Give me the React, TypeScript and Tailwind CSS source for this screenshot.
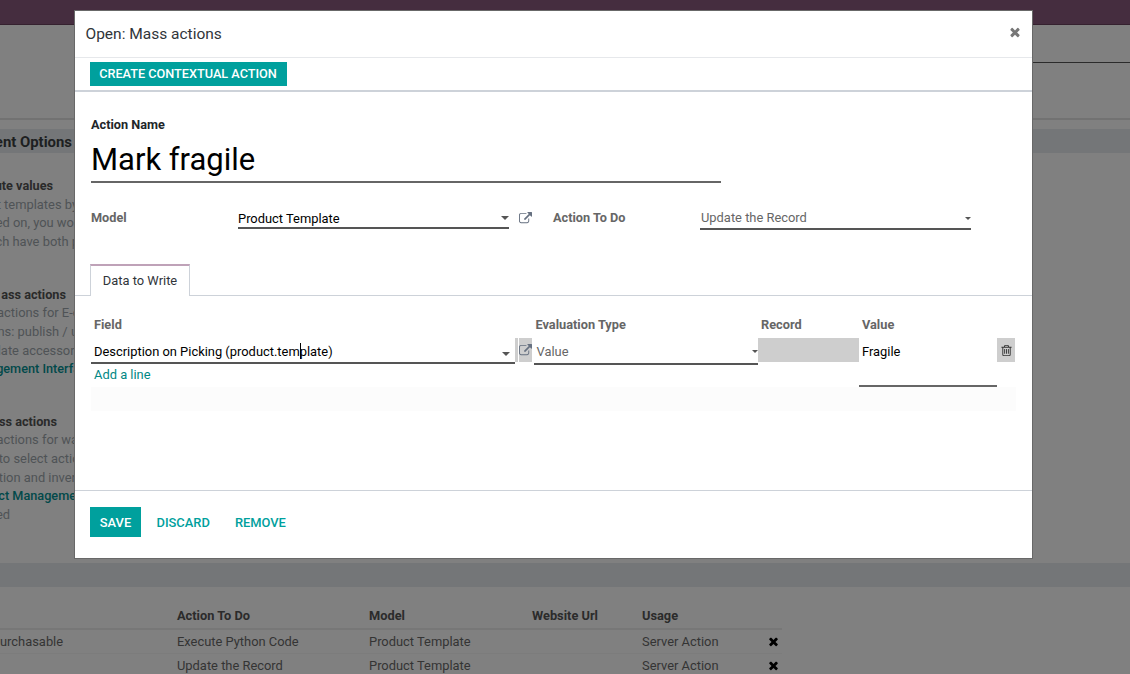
import React from "react";

const Icon = ({ d, className }: { d: string; className: string }) => (
  <svg viewBox="0 0 1792 1792" fill="currentColor" className={className}>
    <path d={d} />
  </svg>
);

const EXTERNAL =
  "M1408 928v320q0 119-84.5 203.5t-203.5 84.5h-832q-119 0-203.5-84.5t-84.5-203.5v-832q0-119 84.5-203.5t203.5-84.5h704q14 0 23 9t9 23v64q0 14-9 23t-23 9h-704q-66 0-113 47t-47 113v832q0 66 47 113t113 47h832q66 0 113-47t47-113v-320q0-14 9-23t23-9h64q14 0 23 9t9 23zm384-864v512q0 26-19 45t-45 19-45-19l-176-176-652 652q-10 10-23 10t-23-10l-114-114q-10-10-10-23t10-23l652-652-176-176q-19-19-19-45t19-45 45-19h512q26 0 45 19t19 45z";
const TRASH =
  "M704 736v576q0 14-9 23t-23 9h-64q-14 0-23-9t-9-23v-576q0-14 9-23t23-9h64q14 0 23 9t9 23zm256 0v576q0 14-9 23t-23 9h-64q-14 0-23-9t-9-23v-576q0-14 9-23t23-9h64q14 0 23 9t9 23zm256 0v576q0 14-9 23t-23 9h-64q-14 0-23-9t-9-23v-576q0-14 9-23t23-9h64q14 0 23 9t9 23zm128 724v-948h-896v948q0 22 7 40.5t14.5 27 10.5 8.5h832q3 0 10.5-8.5t14.5-27 7-40.5zm-672-1076h448l-48-117q-7-9-17-11h-317q-10 2-17 11zm928 32v64q0 14-9 23t-23 9h-96v948q0 83-47 143.5t-113 60.5h-832q-66 0-113-58.5t-47-141.5v-952h-96q-14 0-23-9t-9-23v-64q0-14 9-23t23-9h309l70-167q15-37 54-63t79-26h320q40 0 79 26t54 63l70 167h309q14 0 23 9t9 23z";
const TIMES =
  "M1490 1322q0 40-28 68l-136 136q-28 28-68 28t-68-28l-294-294-294 294q-28 28-68 28t-68-28l-136-136q-28-28-28-68t28-68l294-294-294-294q-28-28-28-68t28-68l136-136q28-28 68-28t68 28l294 294 294-294q28-28 68-28t68 28l136 136q28 28 28 68t-28 68l-294 294 294 294q28 28 28 68z";

const Caret = ({ className }: { className: string }) => (
  <svg viewBox="0 0 8 4" fill="currentColor" className={className}>
    <path d="M0 0h8L4 4z" />
  </svg>
);

type Line = { text: string; width: string; kind: string };
const bold = "font-bold text-[12.7px] text-[#2a2a2a]";
const muted = "text-[#4f5356]";
const link = "font-medium text-[12.7px] text-[#02494a]";

const sections: { gap: string; lines: Line[] }[] = [
  {
    gap: "pt-[23.4px]",
    lines: [
      { text: "ute values", width: "w-[53px]", kind: bold },
      { text: "t templates by", width: "w-[78px]", kind: muted },
      { text: "ed on, you wou", width: "w-[81px]", kind: muted },
      { text: "ch have both p", width: "w-[79px]", kind: muted },
    ],
  },
  {
    gap: "pt-[34.5px]",
    lines: [
      { text: "ass actions", width: "w-[66px]", kind: bold },
      { text: "actions for E-c", width: "w-[79.5px]", kind: muted },
      { text: "ns: publish / u", width: "w-[78px]", kind: muted },
      { text: "late accessor", width: "w-[74.5px]", kind: muted },
      { text: "gement Interfa", width: "w-[80px]", kind: link },
    ],
  },
  {
    gap: "pt-[34px]",
    lines: [
      { text: "ss actions", width: "w-[57px]", kind: bold },
      { text: "actions for wa", width: "w-[78px]", kind: muted },
      { text: "to select actio", width: "w-[79.5px]", kind: muted },
      { text: "tion and inver", width: "w-[76px]", kind: muted },
      { text: "ct Manageme", width: "w-[76px]", kind: link },
      { text: "ed", width: "w-[10px]", kind: muted },
    ],
  },
];

const cols = "grid grid-cols-[177px_192px_163px_110px_126px_14px] items-center";
const rows = [
  ["urchasable", "Execute Python Code", "Product Template", "", "Server Action"],
  ["", "Update the Record", "Product Template", "", "Server Action"],
];

function Backdrop() {
  return (
    <div className="flex h-[674px] w-[1130px] flex-col bg-[#808080]">
      <div className="h-[25px] shrink-0 border-b border-[#35212f] bg-[#452d3f]" />
      <div className="flex h-[93px] shrink-0 justify-end">
        <div className="h-[38px] w-[300px] border-b border-[#2b2b2b]" />
      </div>
      <div className="h-[2px] shrink-0 bg-[#727272]" />
      <div className="mt-[9px] flex h-6 w-full shrink-0 items-center bg-[#747678]">
        <div className="flex w-[72px] justify-end whitespace-nowrap pt-[2px] text-[14.9px] font-bold leading-6 text-[#1d1f21]">
          ent Options
        </div>
      </div>
      <div className="h-[410px] w-[74px] shrink-0 overflow-hidden">
        {sections.map((s, i) => (
          <div key={i} className={s.gap}>
            {s.lines.map((l) => (
              <div
                key={l.text}
                className={`flex h-[18.6px] items-center justify-end whitespace-nowrap ${l.width} ${l.kind}`}
              >
                {l.text}
              </div>
            ))}
          </div>
        ))}
      </div>
      <div className="h-6 shrink-0 bg-[#747678]" />
      <div className="mt-[16px] w-[782px] text-[#343434]">
        <div className={`${cols} h-[27px] border-b-2 border-[#777777] font-bold text-[12.8px] text-[#2b2b2b]`}>
          <span />
          <span>Action To Do</span>
          <span>Model</span>
          <span>Website Url</span>
          <span>Usage</span>
        </div>
        {rows.map((r, i) => (
          <div key={i} className={`${cols} h-[24px] border-b border-[#7c7c7c]`}>
            {r.map((c, j) => (
              <span key={j}>{c}</span>
            ))}
            <Icon d={TIMES} className="-ml-px h-[13px] w-[13px] text-black" />
          </div>
        ))}
      </div>
    </div>
  );
}

function Dialog() {
  return (
    <div className="absolute left-[75px] top-[11px] flex h-[547px] w-[957px] flex-col bg-white outline outline-[#686868]">
      <div className="flex h-[47px] shrink-0 items-center justify-between border-b border-[#e6e8eb] pl-[10.5px] pr-[10px]">
        <h1 className="pt-px text-[15.5px] text-[#30353a]">Open: Mass actions</h1>
        <Icon d={TIMES} className="mb-[5px] h-[14px] w-[14px] text-[#777777]" />
      </div>
      <div className="flex h-[34px] shrink-0 items-center border-b-2 border-[#cdd2d9] pl-[15px]">
        <button className="h-6 w-[197px] bg-[#00a09d] pr-px text-[12.7px] font-medium text-white">
          CREATE CONTEXTUAL ACTION
        </button>
      </div>

      <div className="flex h-[192px] shrink-0 flex-col pl-[16px] pt-[23px]">
        <label className="h-5 text-[12.7px] font-bold leading-[20px] text-[#212529]">Action Name</label>
        <div className="flex h-[48px] w-[630px] items-center border-b-2 border-[#666666] pt-[3px] text-[31px] leading-[43px] text-black">
          Mark fragile
        </div>
        <div className="mt-[22px] flex items-start">
          <label className="w-[147px] text-[12.7px] font-bold leading-[25px] text-[#666666]">Model</label>
          <div className="flex h-6 w-[271px] items-center justify-between border-b-2 border-[#555555] text-black">
            <span className="pt-[5px]">Product Template</span>
            <Caret className="mt-[4px] h-[4px] w-[8px] text-[#555555]" />
          </div>
          <Icon d={EXTERNAL} className="ml-[10px] mt-[7px] h-[13px] w-[13px] text-[#667080]" />
          <label className="ml-[21px] w-[147px] text-[12.7px] font-bold leading-[25px] text-[#666666]">
            Action To Do
          </label>
          <div className="flex h-[25px] w-[271px] items-center justify-between border-b-2 border-[#555555] pl-px text-[#666666]">
            <span className="pt-[3px]">Update the Record</span>
            <Caret className="mt-[3px] h-[3px] w-[6px] text-[#555555]" />
          </div>
        </div>
      </div>

      <div className="-mt-[20px] flex h-[32px] shrink-0">
        <div className="w-[15px] border-b border-[#cdd2d9]" />
        <div className="w-[100px] border-x border-t-2 border-x-[#cdd2d9] border-t-[#bfa2b8] text-center leading-[29px] text-[#30353a]">
          Data to Write
        </div>
        <div className="flex-1 border-b border-[#cdd2d9]" />
      </div>

      <div className="flex h-[194px] shrink-0 flex-col px-[16px] pt-[18px]">
        <div className="grid h-6 grid-cols-[441.5px_225.5px_101px_1fr] items-center pb-[2px] pl-[3px] text-[12.75px] font-bold text-[#666666]">
          <span>Field</span>
          <span>Evaluation Type</span>
          <span>Record</span>
          <span>Value</span>
        </div>
        <div className="flex h-[49px] items-start">
          <div className="w-[424px]">
            <div className="flex h-[26px] items-center justify-between border-b-2 border-[#555555] pl-[3px] pr-[5px] text-black">
              <span className="flex items-center pt-[3px]">
                Description on Picking (product.tem
                <span className="-mr-px h-4 w-px bg-black" />
                plate)
              </span>
              <Caret className="mt-[7px] h-[4px] w-[8px] text-[#555555]" />
            </div>
            <div className="pl-[3px] leading-[22px] text-[#008784]">Add a line</div>
          </div>
          <div className="h-6 w-[3px] bg-[#cecece]" />
          <div className="ml-px flex h-6 w-[13px] items-center justify-center bg-[#cecece]">
            <Icon d={EXTERNAL} className="-ml-px h-[13px] w-[13px] shrink-0 text-[#667080]" />
          </div>
          <div className="ml-[2px] flex h-[27px] w-[224px] items-center justify-between border-b-2 border-[#555555] pl-[2.5px] text-[#666666]">
            <span className="pt-[3px]">Value</span>
            <Caret className="mt-[1px] h-[3px] w-[6px] text-[#555555]" />
          </div>
          <div className="h-6 w-[101px] bg-[#cecece]" />
          <div className="h-[49px] w-[138px] border-b-2 border-[#666666] pl-[3px] leading-[27px] text-black">
            Fragile
          </div>
          <div className="flex h-6 w-[18px] items-center justify-center bg-[#cecece]">
            <Icon d={TRASH} className="h-[13px] w-[13px] text-[#333333]" />
          </div>
        </div>
        <div className="h-6 w-[925px] bg-[#fcfcfc]" />
      </div>

      <div className="flex flex-1 items-start border-t border-[#cdd2d9] pl-[15px] pt-4 font-medium text-[#00a09d]">
        <button className="h-[30px] w-[51px] bg-[#00a09d] pt-[2px] text-white">SAVE</button>
        <button className="ml-[15.5px] h-[30px] pt-[2px]">DISCARD</button>
        <button className="ml-[25px] h-[30px] pt-[2px]">REMOVE</button>
      </div>
    </div>
  );
}

export default function App() {
  return (
    <div className="relative h-[674px] w-[1130px] overflow-hidden font-['Roboto',sans-serif] text-[12.9px]">
      <Backdrop />
      <Dialog />
    </div>
  );
}
